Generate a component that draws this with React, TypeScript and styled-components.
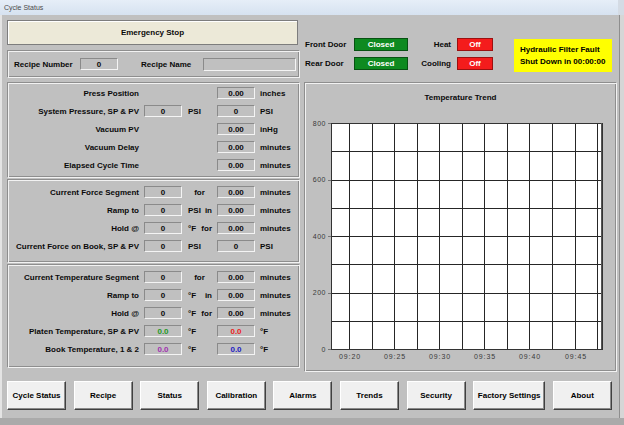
import { FunctionComponent } from "react";
import styled, { createGlobalStyle, css } from "styled-components";

const GlobalStyle = createGlobalStyle`
  html, body {
    margin: 0;
    padding: 0;
    background: #c0c0c0;
    font-family: "Liberation Sans", Arial, sans-serif;
  }
`;

type Tone = "plain" | "green" | "red" | "purple" | "blue";

interface Row {
  label: string;
  a?: string;
  aTone?: Tone;
  mid?: string[];
  midCenter?: boolean;
  b: string;
  bTone?: Tone;
  unit: string;
}

const pressRows: Row[] = [
  { label: "Press Position", b: "0.00", unit: "inches" },
  { label: "System Pressure, SP & PV", a: "0", mid: ["PSI"], b: "0", unit: "PSI" },
  { label: "Vacuum PV", b: "0.00", unit: "inHg" },
  { label: "Vacuum Delay", b: "0.00", unit: "minutes" },
  { label: "Elapsed Cycle Time", b: "0.00", unit: "minutes" },
];

const forceRows: Row[] = [
  { label: "Current Force Segment", a: "0", mid: ["for"], midCenter: true, b: "0.00", unit: "minutes" },
  { label: "Ramp to", a: "0", mid: ["PSI", "in"], b: "0.00", unit: "minutes" },
  { label: "Hold @", a: "0", mid: ["°F", "for"], b: "0.00", unit: "minutes" },
  { label: "Current Force on Book, SP & PV", a: "0", mid: ["PSI"], b: "0", unit: "PSI" },
];

const tempRows: Row[] = [
  { label: "Current Temperature Segment", a: "0", mid: ["for"], midCenter: true, b: "0.00", unit: "minutes" },
  { label: "Ramp to", a: "0", mid: ["°F", "in"], b: "0.00", unit: "minutes" },
  { label: "Hold @", a: "0", mid: ["°F", "for"], b: "0.00", unit: "minutes" },
  { label: "Platen Temperature, SP & PV", a: "0.0", aTone: "green", mid: ["°F"], b: "0.0", bTone: "red", unit: "°F" },
  { label: "Book Temperature, 1 & 2", a: "0.0", aTone: "purple", mid: ["°F"], b: "0.0", bTone: "blue", unit: "°F" },
];

const navButtons = [
  "Cycle Status",
  "Recipe",
  "Status",
  "Calibration",
  "Alarms",
  "Trends",
  "Security",
  "Factory Settings",
  "About",
];

const toneColors: Record<Tone, string> = {
  plain: "#0a0a0a",
  green: "#1f9a1f",
  red: "#ee2020",
  purple: "#a030b0",
  blue: "#1c1cc4",
};

// chart geometry (svg coords)
const PLOT_X = 26;
const PLOT_Y = 13;
const PLOT_W = 271;
const PLOT_H = 226;
const V_STEP = 22.55;
const V_FIRST = 18;

const App: FunctionComponent = () => {
  const renderRows = (rows: Row[]) =>
    rows.map((r, i) => (
      <DataRow key={i}>
        <RowLabel>{r.label}</RowLabel>
        <Cell>{r.a !== undefined && <ValueBox $tone={r.aTone ?? "plain"}>{r.a}</ValueBox>}</Cell>
        <MidText $center={!!r.midCenter} $split={(r.mid?.length ?? 0) > 1}>
          {r.mid?.map((m) => (
            <span key={m}>{m}</span>
          ))}
        </MidText>
        <Cell>
          <ValueBox $tone={r.bTone ?? "plain"}>{r.b}</ValueBox>
        </Cell>
        <UnitText>{r.unit}</UnitText>
      </DataRow>
    ));

  const hLines = Array.from({ length: 9 }, (_, i) => PLOT_Y + Math.round((PLOT_H * i) / 8) + 0.5);
  const vLines = Array.from({ length: 12 }, (_, i) => PLOT_X + Math.round(V_FIRST + V_STEP * i) + 0.5);
  const yLabels = ["800", "600", "400", "200", "0"];
  const xLabels = ["09:20", "09:25", "09:30", "09:35", "09:40", "09:45"];

  return (
    <Window>
      <GlobalStyle />
      <TitleBar>Cycle Status</TitleBar>
      <Body>
        <Main>
          <LeftColumn>
            <EmergencyStop>Emergency Stop</EmergencyStop>
            <RecipeBar>
              <BarLabel>Recipe Number</BarLabel>
              <ValueBox $tone="plain">0</ValueBox>
              <BarLabel $pad={23}>Recipe Name</BarLabel>
              <ValueBox $tone="plain" />
            </RecipeBar>
            <Panel $h={96} $padTop={1}>
              {renderRows(pressRows)}
            </Panel>
            <Panel $h={84} $padTop={3}>
              {renderRows(forceRows)}
            </Panel>
            <Panel $h={104} $padTop={3} $tight>
              {renderRows(tempRows)}
            </Panel>
          </LeftColumn>

          <RightColumn>
            <StatusArea>
              <StatusGrid $labelW={49} $boxW={54}>
                <StatusLabel>Front Door</StatusLabel>
                <Indicator $on>Closed</Indicator>
                <StatusLabel>Rear Door</StatusLabel>
                <Indicator $on>Closed</Indicator>
              </StatusGrid>
              <StatusGrid $labelW={41} $boxW={36} $right>
                <StatusLabel>Heat</StatusLabel>
                <Indicator>Off</Indicator>
                <StatusLabel>Cooling</StatusLabel>
                <Indicator>Off</Indicator>
              </StatusGrid>
              <FaultBox>
                <div>Hydraulic Filter Fault</div>
                <div>Shut Down in 00:00:00</div>
              </FaultBox>
            </StatusArea>

            <ChartPanel>
              <ChartTitle>Temperature Trend</ChartTitle>
              <svg width={311} height={256} shapeRendering="crispEdges">
                <rect x={PLOT_X} y={PLOT_Y} width={PLOT_W} height={PLOT_H} fill="#ffffff" />
                {hLines.map((y) => (
                  <line key={y} x1={PLOT_X} x2={PLOT_X + PLOT_W + 1} y1={y} y2={y} stroke="#262626" />
                ))}
                {vLines.map((x) => (
                  <line key={x} x1={x} x2={x} y1={PLOT_Y} y2={PLOT_Y + PLOT_H} stroke="#262626" />
                ))}
                <rect
                  x={PLOT_X + 0.5}
                  y={PLOT_Y + 0.5}
                  width={PLOT_W}
                  height={PLOT_H}
                  fill="none"
                  stroke="#333"
                />
                <line x1={PLOT_X + PLOT_W - 0.5} x2={PLOT_X + PLOT_W - 0.5} y1={PLOT_Y} y2={PLOT_Y + PLOT_H} stroke="#555" />
                {yLabels.map((l, i) => (
                  <AxisText key={l} x={PLOT_X - 5} y={PLOT_Y + (PLOT_H * i) / 4 + 2.5} textAnchor="end">
                    {l}
                  </AxisText>
                ))}
                {yLabels.map((l, i) => (
                  <line
                    key={"t" + l}
                    x1={PLOT_X - 3}
                    x2={PLOT_X}
                    y1={PLOT_Y + Math.round((PLOT_H * i) / 4) + 0.5}
                    y2={PLOT_Y + Math.round((PLOT_H * i) / 4) + 0.5}
                    stroke="#777"
                  />
                ))}
                {xLabels.map((l, i) => (
                  <AxisText key={l} x={vLines[i * 2] + 0.5} y={PLOT_Y + PLOT_H + 10} textAnchor="middle" $spaced>
                    {l}
                  </AxisText>
                ))}
              </svg>
            </ChartPanel>
          </RightColumn>
        </Main>

        <ButtonBar>
          {navButtons.map((b) => (
            <NavButton key={b} $wide={b === "Factory Settings"}>
              {b}
            </NavButton>
          ))}
        </ButtonBar>
      </Body>
      <BottomStrip />
    </Window>
  );
};

const etched = css`
  border-top: 1px solid #8e8e8e;
  border-left: 1px solid #8e8e8e;
  border-bottom: 1px solid #f2f2f2;
  border-right: 1px solid #f2f2f2;
  box-shadow: inset 1px 1px 0 #f2f2f2, inset -1px -1px 0 #8e8e8e;
`;

const boldText = css`
  font-size: 8px;
  font-weight: 700;
  color: #0a0a0a;
`;

const Window = styled.div`
  width: 624px;
  height: 425px;
  background: #c0c0c0;
  display: flex;
  flex-direction: column;
  overflow: hidden;
`;

const TitleBar = styled.div`
  height: 15px;
  line-height: 15px;
  padding-left: 4px;
  font-size: 7px;
  color: #4a4a4a;
  background: linear-gradient(#e6eef8, #d6e2f0);
  border-right: 6px solid #d4dbe4;
`;

const Body = styled.div`
  flex: 1;
  display: flex;
  flex-direction: column;
  padding: 5px 0 0 7px;
  box-shadow: inset 2px 0 0 #e4e4e4, inset -4px 0 0 #d6d6d6, inset -5px 0 0 #8e8e8e;
`;

const Main = styled.div`
  display: flex;
  gap: 4px;
`;

const LeftColumn = styled.div`
  width: 293px;
  display: flex;
  flex-direction: column;
`;

const EmergencyStop = styled.div`
  ${boldText};
  width: 291px;
  height: 25px;
  box-sizing: border-box;
  display: flex;
  align-items: center;
  justify-content: center;
  background: #ece9d8;
  border: 1px solid #7d7d7d;
  box-shadow: inset 1px 1px 0 #ffffff;
`;

const RecipeBar = styled.div`
  ${etched};
  margin-top: 5px;
  height: 28px;
  box-sizing: border-box;
  display: grid;
  grid-template-columns: 66px 38px 85px 93px;
  align-items: center;
  padding-left: 6px;

  & > div:last-child {
    height: 13px;
  }
`;

const BarLabel = styled.div<{ $pad?: number }>`
  ${boldText};
  padding-left: ${({ $pad }) => $pad ?? 0}px;
`;

const Panel = styled.div<{ $h: number; $padTop: number; $tight?: boolean }>`
  ${etched};
  margin-top: ${({ $tight }) => ($tight ? 1 : 4)}px;
  height: ${({ $h }) => $h}px;
  box-sizing: border-box;
  padding-top: ${({ $padTop }) => $padTop}px;
  display: flex;
  flex-direction: column;

  & + & {
    margin-top: ${({ $tight }) => ($tight ? 1 : 6)}px;
  }
`;

const DataRow = styled.div`
  height: 18px;
  display: grid;
  grid-template-columns: 136px 38px 35px 38px 1fr;
  align-items: center;
`;

const RowLabel = styled.div`
  ${boldText};
  text-align: right;
  padding-right: 5px;
  white-space: nowrap;
`;

const Cell = styled.div`
  display: flex;
`;

const ValueBox = styled.div<{ $tone: Tone }>`
  ${boldText};
  color: ${({ $tone }) => toneColors[$tone]};
  width: 100%;
  height: 12px;
  line-height: 11px;
  box-sizing: border-box;
  text-align: center;
  border-top: 1px solid #8a8a8a;
  border-left: 1px solid #8a8a8a;
  border-bottom: 1px solid #f4f4f4;
  border-right: 1px solid #f4f4f4;
`;

const MidText = styled.div<{ $center: boolean; $split: boolean }>`
  ${boldText};
  display: flex;
  justify-content: ${({ $center, $split }) => ($split ? "space-between" : $center ? "center" : "flex-start")};
  padding: ${({ $center }) => ($center ? "0" : "0 5px 0 6px")};
`;

const UnitText = styled.div`
  ${boldText};
  padding-left: 5px;
`;

const RightColumn = styled.div`
  width: 313px;
  display: flex;
  flex-direction: column;
`;

const StatusArea = styled.div`
  height: 58px;
  box-sizing: border-box;
  padding: 18px 5px 0 1px;
  display: flex;
  align-items: flex-start;
  gap: 2px;
`;

const StatusGrid = styled.div<{ $labelW: number; $boxW: number; $right?: boolean }>`
  display: grid;
  grid-template-columns: ${({ $labelW, $boxW }) => `${$labelW}px ${$boxW}px`};
  grid-auto-rows: 13px;
  row-gap: 6px;
  column-gap: ${({ $right }) => ($right ? 6 : 0)}px;
  align-items: center;

  & > div:nth-child(odd) {
    text-align: ${({ $right }) => ($right ? "right" : "left")};
  }
`;

const StatusLabel = styled.div`
  ${boldText};
`;

const Indicator = styled.div<{ $on?: boolean }>`
  ${boldText};
  color: #ffffff;
  height: 13px;
  line-height: 12px;
  box-sizing: border-box;
  text-align: center;
  background: ${({ $on }) => ($on ? "#0e8a20" : "#f41c1c")};
  border: 1px solid ${({ $on }) => ($on ? "#075212" : "#9c1010")};
`;

const FaultBox = styled.div`
  ${boldText};
  color: #000;
  margin: 1px 0 0 auto;
  width: 98px;
  height: 33px;
  box-sizing: border-box;
  padding: 5px 0 0 6px;
  line-height: 12px;
  background: #ffff00;
  white-space: nowrap;
`;

const ChartPanel = styled.div`
  ${etched};
  margin-top: 4px;
  height: 290px;
  box-sizing: border-box;
  display: flex;
  flex-direction: column;
`;

const ChartTitle = styled.div`
  ${boldText};
  height: 27px;
  box-sizing: border-box;
  padding-top: 10px;
  line-height: 10px;
  text-align: center;
`;

const AxisText = styled.text<{ $spaced?: boolean }>`
  font-family: "Liberation Sans", Arial, sans-serif;
  font-size: 7px;
  fill: #3a3a3a;
  letter-spacing: ${({ $spaced }) => ($spaced ? "0.9px" : "0.5px")};
`;

const ButtonBar = styled.div`
  margin-top: 9px;
  display: flex;
  gap: 7.6px;
`;

const NavButton = styled.button<{ $wide?: boolean }>`
  ${boldText};
  font-family: "Liberation Sans", Arial, sans-serif;
  color: #000;
  width: ${({ $wide }) => ($wide ? 72 : 59)}px;
  height: 29px;
  padding: 0;
  background: #f0f0f0;
  border-top: 1px solid #ffffff;
  border-left: 1px solid #ffffff;
  border-bottom: 1px solid #404040;
  border-right: 1px solid #404040;
  box-shadow: inset -1px -1px 0 #8a8a8a;
`;

const BottomStrip = styled.div`
  height: 7px;
  background: #aaaaaa;
`;

export default App;
